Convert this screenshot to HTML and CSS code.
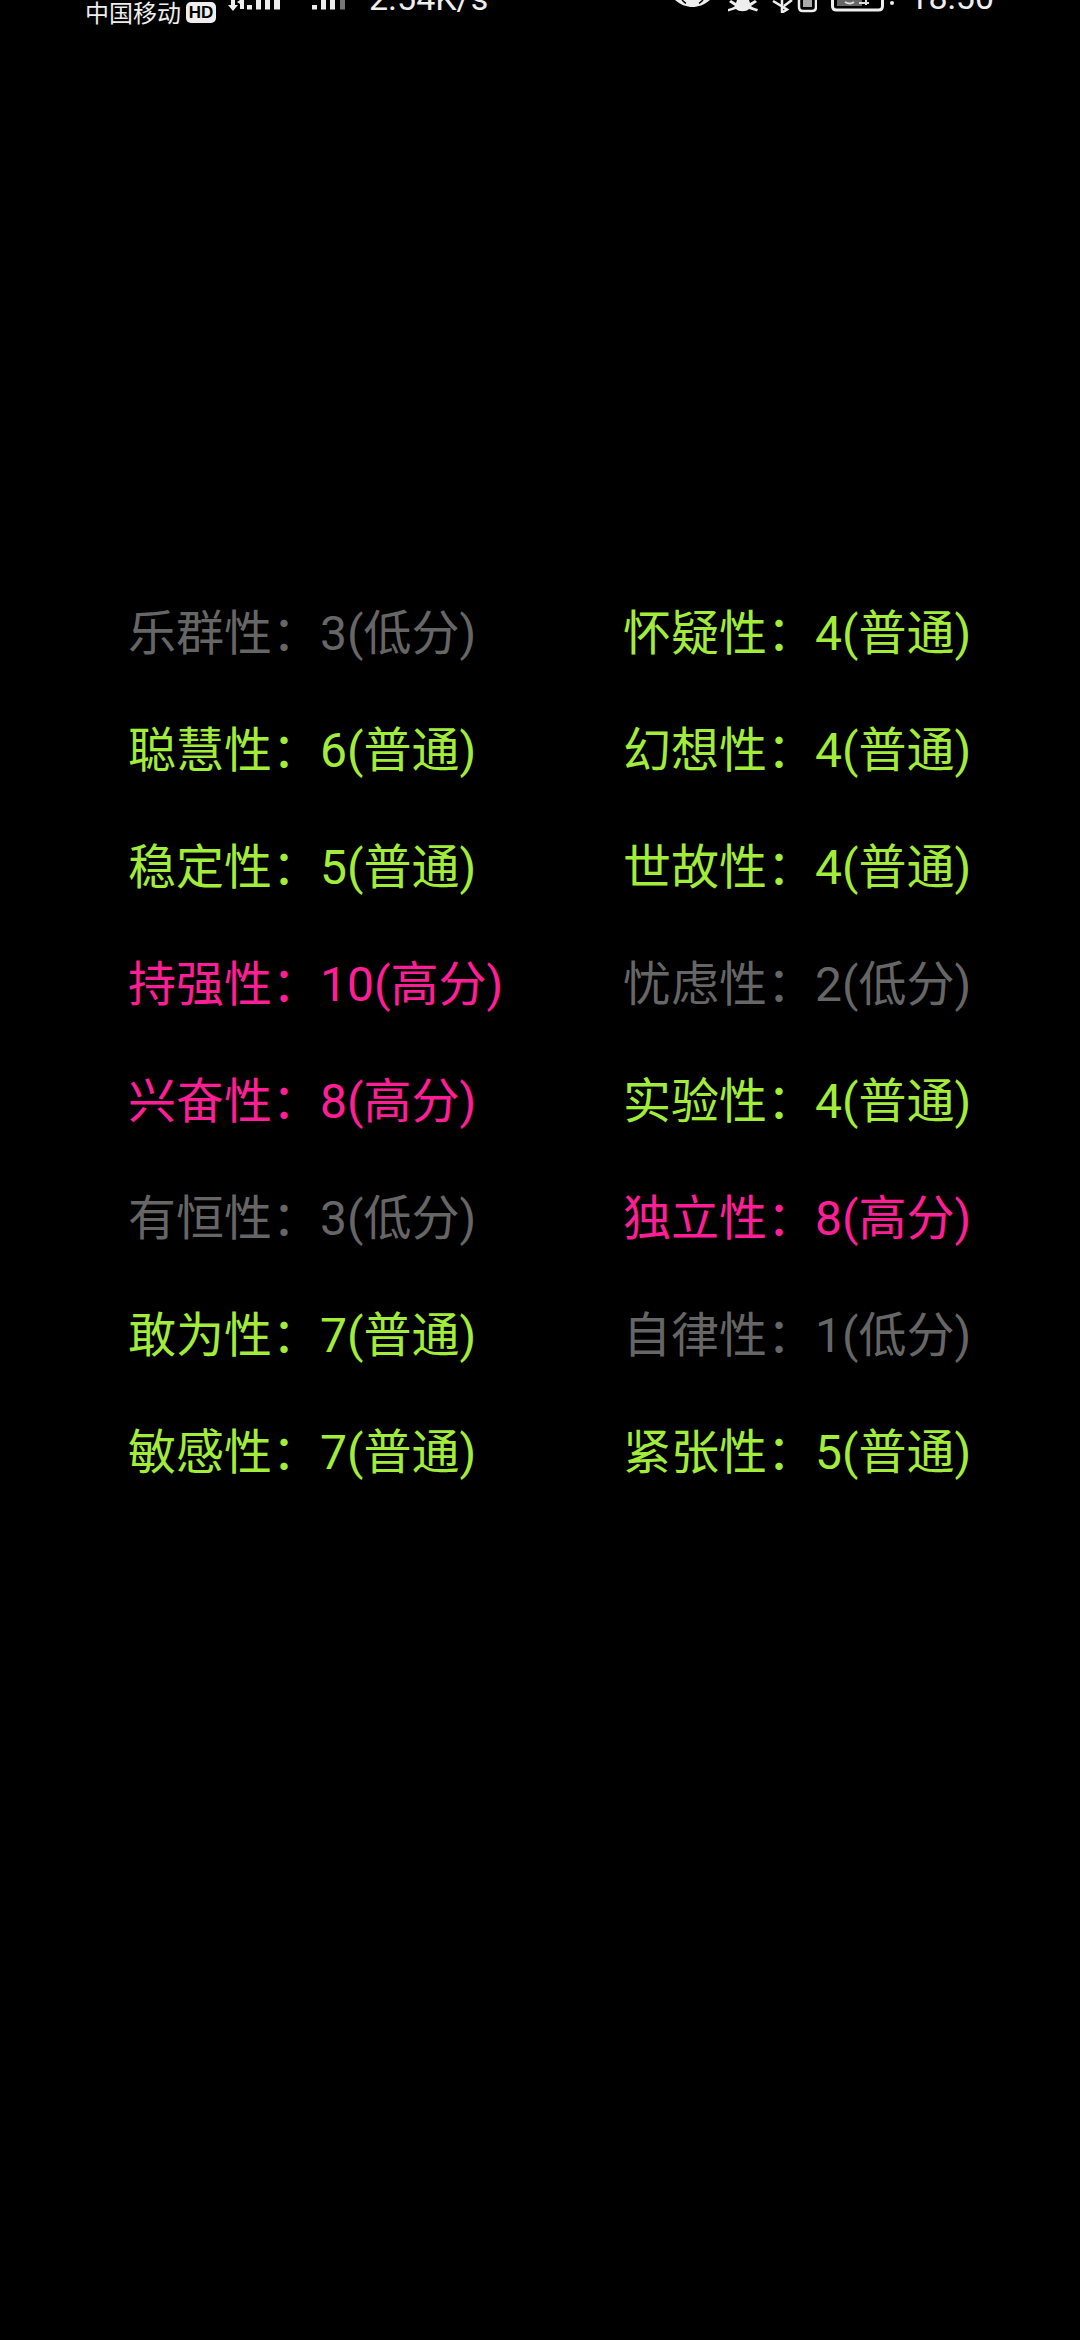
FILE: index.html
```html
<!DOCTYPE html>
<html lang="zh">
<head>
<meta charset="utf-8">
<title>16PF</title>
<link rel="stylesheet" href="styles.css">
</head>
<body>
<div class="status">
  <div class="side">
    <span class="carrier">中国移动</span>
    <span class="hd">HD</span>
    <svg class="sig1" width="54" height="12" viewBox="0 0 54 12"><g fill="#eee"><path d="M3 0h4v5h3L5 11 0 5h3zM9 2l3 2V0zM12 0h4v9h-4z"/><rect x="19" y="5" width="5" height="4.5"/><rect x="28" y="0" width="5" height="9.5"/><rect x="37" y="0" width="5" height="9.5"/><rect x="46" y="0" width="6" height="9.5"/></g></svg>
    <svg class="sig2" width="34" height="12" viewBox="0 0 34 12"><g fill="#eee"><rect x="0" y="5" width="5" height="4.5"/><rect x="9" y="0" width="5" height="9.5"/><rect x="18" y="0" width="5" height="9.5"/></g><rect x="28" y="0" width="5" height="9.5" fill="#777"/></svg>
    <span class="speed">2.54K/s</span>
  </div>
  <div class="side">
    <svg class="eye" width="35" height="10" viewBox="0 0 35 10"><path d="M0 0h35C29 5 23 7 17.500 7S6 5 0 0z" fill="#eee"/><path d="M7 0C9 2 10 3 11 3.400M28 0C26 2 25 3 24 3.400" stroke="#000" stroke-width="1.500" fill="none"/></svg>
    <svg class="bell" width="30" height="12" viewBox="0 0 30 12"><path d="M3 0l5 3 1-3h12l1 3 5-3 2 2-6 4c1 1 3 2 7 3l-1 2.500-8-2.500c-3 3-10 3-13 0l-8 2.500L0 9c4-1 6-2 7-3L1 2z" fill="#eee"/></svg>
    <svg class="bt" width="45" height="13" viewBox="0 0 45 13"><path d="M1 1l14 8.500-5 3V0M20 0l-8 6" fill="none" stroke="#eee" stroke-width="2.500"/><path d="M27 0v7q0 4 4 4h9q4 0 4-4V0" fill="none" stroke="#eee" stroke-width="2.500"/><rect x="31" y="0" width="9" height="7" fill="#aaa"/></svg>
    <svg class="batt" width="64" height="13" viewBox="0 0 64 13"><path d="M1.500 0v6q0 4 4 4h42q4 0 4-4V0" fill="none" stroke="#eee" stroke-width="3"/><rect x="6" y="0" width="25" height="6" fill="#666"/><path d="M14 2q5 3 9 0M28 3h10M35 0v5" fill="none" stroke="#ddd" stroke-width="2"/><circle cx="61" cy="3" r="2" fill="#eee"/></svg>
    <span class="time">18:50</span>
  </div>
</div>
<main class="grid">
  <div class="low">乐群性：<span class="val">3(低分)</span></div>
  <div class="mid">怀疑性：<span class="val">4(普通)</span></div>
  <div class="mid">聪慧性：<span class="val">6(普通)</span></div>
  <div class="mid">幻想性：<span class="val">4(普通)</span></div>
  <div class="mid">稳定性：<span class="val">5(普通)</span></div>
  <div class="mid">世故性：<span class="val">4(普通)</span></div>
  <div class="high">持强性：<span class="val">10(高分)</span></div>
  <div class="low">忧虑性：<span class="val">2(低分)</span></div>
  <div class="high">兴奋性：<span class="val">8(高分)</span></div>
  <div class="mid">实验性：<span class="val">4(普通)</span></div>
  <div class="low">有恒性：<span class="val">3(低分)</span></div>
  <div class="high">独立性：<span class="val">8(高分)</span></div>
  <div class="mid">敢为性：<span class="val">7(普通)</span></div>
  <div class="low">自律性：<span class="val">1(低分)</span></div>
  <div class="mid">敏感性：<span class="val">7(普通)</span></div>
  <div class="mid">紧张性：<span class="val">5(普通)</span></div>
</main>
</body>
</html>
```
FILE: styles.css
```css
html, body { margin: 0; padding: 0; background: #000; }
body { width: 1080px; height: 2340px; overflow: hidden; font-family: "Noto Sans CJK SC", "Noto Sans", sans-serif; }
.status { height: 32px; display: flex; justify-content: space-between; color: #eee; overflow: hidden; padding: 0 86px 0 85px; box-sizing: border-box; }
.side { display: flex; align-items: flex-start; }
.carrier { font-size: 24px; line-height: 26px; margin-top: -1px; }
.hd { margin: 2px 0 0 5px; width: 30px; height: 21px; border-radius: 5px; background: #eee; color: #000; font: 700 17px/21px "Liberation Sans", sans-serif; text-align: center; }
.sig1 { margin-left: 12px; }
.sig2 { margin-left: 30px; }
.speed { margin-left: 23px; margin-top: -22px; font: 34px/40px "Roboto", sans-serif; }
.bell { margin-left: 18px; }
.bt { margin-left: 14px; }
.batt { margin-left: 14px; }
.time { margin-left: 14px; margin-top: -23px; font: 34px/40px "Roboto", sans-serif; }
.grid { display: grid; grid-template-columns: 495px 1fr; grid-auto-rows: 117px; margin: 539px 0 0 128px; font-size: 48px; line-height: 117px; white-space: nowrap; }
.low { color: #666; }
.mid { color: #a2ec3a; }
.high { color: #ff1e96; }
.val { font-family: "Roboto", "Noto Sans CJK SC", sans-serif; }
```
